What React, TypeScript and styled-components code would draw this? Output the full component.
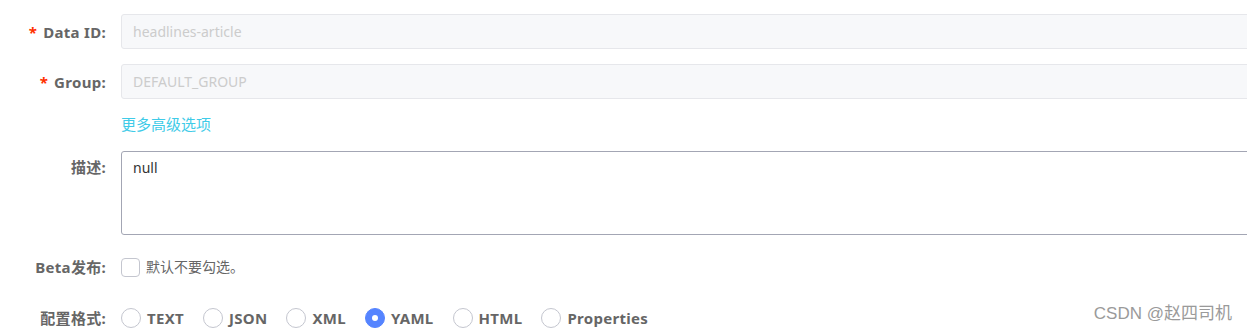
import styled, { createGlobalStyle } from "styled-components";

const GlobalStyle = createGlobalStyle`
  html, body {
    margin: 0;
    padding: 0;
    background: #fff;
    overflow: hidden;
  }
  body {
    font-family: "Noto Sans", "Noto Sans CJK SC", sans-serif;
    font-size: 14px;
    color: #666;
  }
`;

const Page = styled.div`
  position: relative;
  width: 1247px;
  height: 331px;
  overflow: hidden;
`;

const Form = styled.div`
  padding-top: 14px;
  display: flex;
  flex-direction: column;
`;

const FormItem = styled.div<{ $gap?: number; $top?: boolean }>`
  display: grid;
  grid-template-columns: 106px 1150px;
  column-gap: 15px;
  align-items: ${({ $top }) => ($top ? "start" : "center")};
  margin-bottom: ${({ $gap }) => $gap ?? 0}px;
`;

const Label = styled.label<{ $tall?: boolean }>`
  text-align: right;
  font-weight: 700;
  color: #666;
  font-size: 15px;
  letter-spacing: 0.3px;
  line-height: ${({ $tall }) => ($tall ? "32px" : "20px")};
  white-space: nowrap;
`;

const Required = styled.span`
  color: #ff3000;
  margin-right: 6px;
`;

const Input = styled.div`
  box-sizing: border-box;
  height: 35px;
  border: 1px solid #e6e7eb;
  border-radius: 3px;
  background: #f7f8fa;
  color: #cccccc;
  padding: 0 11px;
  line-height: 33px;
  font-size: 14px;
`;

const MoreLink = styled.a`
  color: #3fcbe8;
  font-size: 15px;
  line-height: 22px;
  text-decoration: none;
  cursor: pointer;
`;

const TextArea = styled.div`
  box-sizing: border-box;
  height: 84px;
  border: 1px solid #a3a6b4;
  border-radius: 3px;
  padding: 6px 11px;
  color: #333;
  line-height: 20px;
  font-size: 14px;
`;

const CheckRow = styled.div`
  display: flex;
  align-items: center;
  gap: 6px;
  color: #666;
  line-height: 20px;
`;

const CheckBox = styled.span`
  box-sizing: border-box;
  width: 19px;
  height: 19px;
  border: 1px solid #c4c6cf;
  border-radius: 4px;
  background: #fff;
`;

const RadioGroup = styled.div`
  display: flex;
  align-items: center;
  gap: 19px;
`;

const RadioItem = styled.label`
  display: flex;
  align-items: center;
  gap: 6px;
  font-weight: 700;
  font-size: 15px;
  letter-spacing: 0.3px;
  color: #666;
  line-height: 20px;
`;

const Circle = styled.span<{ $checked?: boolean }>`
  box-sizing: border-box;
  width: 20px;
  height: 20px;
  border-radius: 50%;
  border: 1px solid ${({ $checked }) => ($checked ? "#5584ff" : "#c4c6cf")};
  background: ${({ $checked }) => ($checked ? "#5584ff" : "#fff")};
  display: flex;
  align-items: center;
  justify-content: center;
  &::after {
    content: "";
    display: ${({ $checked }) => ($checked ? "block" : "none")};
    width: 6px;
    height: 6px;
    border-radius: 50%;
    background: #fff;
  }
`;

const Watermark = styled.div`
  position: absolute;
  right: 15px;
  bottom: 7px;
  color: #9a9a9a;
  font-size: 17px;
  font-family: "Liberation Sans", "Noto Sans CJK SC", sans-serif;
`;

const formats = ["TEXT", "JSON", "XML", "YAML", "HTML", "Properties"];

export default function App() {
  return (
    <Page>
      <GlobalStyle />
      <Form>
        <FormItem $gap={15}>
          <Label>
            <Required>*</Required>Data ID:
          </Label>
          <Input>headlines-article</Input>
        </FormItem>
        <FormItem $gap={14}>
          <Label>
            <Required>*</Required>Group:
          </Label>
          <Input>DEFAULT_GROUP</Input>
        </FormItem>
        <FormItem $gap={16}>
          <span />
          <MoreLink>更多高级选项</MoreLink>
        </FormItem>
        <FormItem $gap={22} $top>
          <Label $tall>描述:</Label>
          <TextArea>null</TextArea>
        </FormItem>
        <FormItem $gap={31}>
          <Label>Beta发布:</Label>
          <CheckRow>
            <CheckBox />
            默认不要勾选。
          </CheckRow>
        </FormItem>
        <FormItem>
          <Label>配置格式:</Label>
          <RadioGroup>
            {formats.map((f) => (
              <RadioItem key={f}>
                <Circle $checked={f === "YAML"} />
                {f}
              </RadioItem>
            ))}
          </RadioGroup>
        </FormItem>
      </Form>
      <Watermark>CSDN @赵四司机</Watermark>
    </Page>
  );
}
